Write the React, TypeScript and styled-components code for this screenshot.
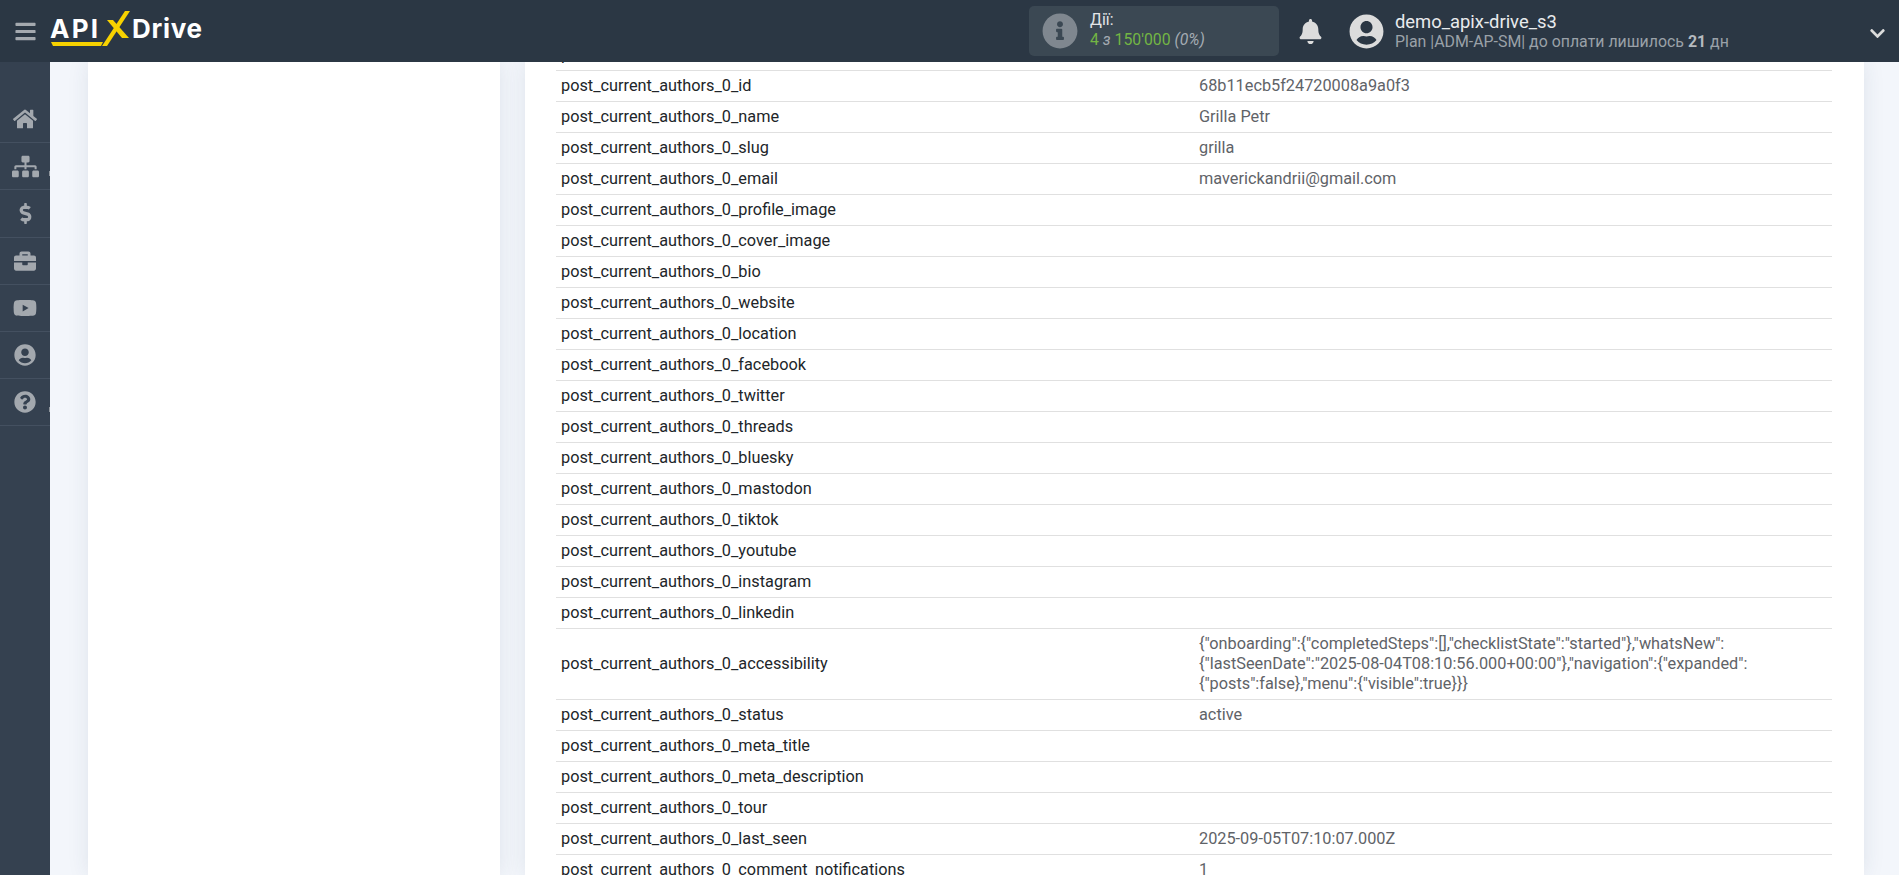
import React from "react";
import styled, { createGlobalStyle } from "styled-components";
import {
  FaBars,
  FaBell,
  FaBriefcase,
  FaChevronDown,
  FaDollarSign,
  FaHome,
  FaInfoCircle,
  FaQuestionCircle,
  FaSitemap,
  FaUserCircle,
  FaYoutube,
} from "react-icons/fa";

const GlobalStyle = createGlobalStyle`
  html, body {
    margin: 0;
    padding: 0;
    height: 100%;
    overflow: hidden;
    background: #f3f6fb;
    font-family: "Roboto", "Liberation Sans", sans-serif;
  }
`;

const Page = styled.div`
  width: 1899px;
  height: 875px;
  display: flex;
  flex-direction: column;
  overflow: hidden;
`;

const Header = styled.header`
  height: 62px;
  flex: none;
  display: flex;
  align-items: center;
  background: #2b3744;
  color: #fff;
  position: relative;
  z-index: 2;
`;

const Burger = styled.div`
  width: 50px;
  display: flex;
  justify-content: center;
  color: #a4a9af;
  font-size: 23px;
  line-height: 0;
`;

const LogoBox = styled.div`
  width: 980px;
  line-height: 0;
`;

const ActionsBox = styled.div`
  width: 250px;
  height: 50px;
  margin-left: -1px;
  box-sizing: border-box;
  padding-left: 13px;
  border-radius: 5px;
  background: #3b4853;
  display: flex;
  align-items: center;
  gap: 12px;
`;

const InfoIcon = styled.div`
  color: #7f878f;
  font-size: 36px;
  line-height: 0;
`;

const ActionsText = styled.div`
  font-size: 15.8px;
  line-height: 20px;
  color: #e3e5e8;
  margin-top: -2px;
`;

const Green = styled.span`
  color: #73b544;
`;

const Muted = styled.em`
  color: #a4abb2;
`;

const BellBox = styled.div`
  width: 60px;
  margin-left: 1px;
  display: flex;
  justify-content: center;
  color: #dcdcdc;
  font-size: 25px;
  line-height: 0;
`;

const Avatar = styled.div`
  margin-left: 9px;
  color: #dcdcdc;
  font-size: 35px;
  line-height: 0;
`;

const UserInfo = styled.div`
  margin-left: 11px;
  flex: 1;
`;

const UserName = styled.div`
  font-size: 18.4px;
  line-height: 22px;
  color: #e9ebed;
`;

const UserPlan = styled.div`
  font-size: 15.9px;
  line-height: 18px;
  color: #9aa1a8;

  b {
    font-weight: 700;
    color: #b5babf;
  }
`;

const Chevron = styled.div`
  width: 46px;
  box-sizing: border-box;
  padding: 4px 0 0 16px;
  color: #dcdcdc;
  font-size: 17px;
  line-height: 0;
`;

const Body = styled.div`
  flex: 1;
  display: flex;
  min-height: 0;
`;

const Sidebar = styled.nav`
  width: 50px;
  flex: none;
  padding-top: 34px;
  background: #354150;
`;

const SideItem = styled.div<{ $size: number; $notch?: boolean }>`
  height: 47.2px;
  box-sizing: border-box;
  border-bottom: 1px solid #445060;
  display: flex;
  align-items: center;
  justify-content: center;
  position: relative;
  color: #a3a8ae;
  font-size: ${({ $size }) => $size}px;
  line-height: 0;

  &::after {
    content: "";
    display: ${({ $notch }) => ($notch ? "block" : "none")};
    position: absolute;
    right: 0;
    top: 28px;
    width: 1px;
    height: 5px;
    background: #8f959c;
  }
`;

const Main = styled.main`
  flex: 1;
  display: flex;
  min-width: 0;
  padding: 0 35px 0 38px;
  gap: 25px;
  overflow: hidden;
`;

const Card = styled.section`
  background: #fff;
  box-shadow: 0 0 20px rgba(40, 60, 90, 0.1);
`;

const LeftCard = styled(Card)`
  width: 412px;
  flex: none;
`;

const RightCard = styled(Card)`
  flex: 1;
  min-width: 0;
  padding: 0 32px 0 31px;
`;

const Table = styled.div`
  margin-top: -22px;
  display: flex;
  flex-direction: column;
`;

const Row = styled.div`
  display: grid;
  grid-template-columns: 643px 1fr;
  align-items: center;
  min-height: 31px;
  box-sizing: border-box;
  padding: 5px 0;
  border-bottom: 1px solid #e0e0e0;
  font-size: 16.3px;
  line-height: 20px;
`;

const Key = styled.div`
  padding-left: 5px;
  color: #212529;
`;

const Value = styled.div`
  padding-right: 80px;
  color: #5f6368;
  word-break: break-word;
`;

const rows: [string, string][] = [
  ["post_current_authors_0", ""],
  ["post_current_authors_0_id", "68b11ecb5f24720008a9a0f3"],
  ["post_current_authors_0_name", "Grilla Petr"],
  ["post_current_authors_0_slug", "grilla"],
  ["post_current_authors_0_email", "maverickandrii@gmail.com"],
  ["post_current_authors_0_profile_image", ""],
  ["post_current_authors_0_cover_image", ""],
  ["post_current_authors_0_bio", ""],
  ["post_current_authors_0_website", ""],
  ["post_current_authors_0_location", ""],
  ["post_current_authors_0_facebook", ""],
  ["post_current_authors_0_twitter", ""],
  ["post_current_authors_0_threads", ""],
  ["post_current_authors_0_bluesky", ""],
  ["post_current_authors_0_mastodon", ""],
  ["post_current_authors_0_tiktok", ""],
  ["post_current_authors_0_youtube", ""],
  ["post_current_authors_0_instagram", ""],
  ["post_current_authors_0_linkedin", ""],
  [
    "post_current_authors_0_accessibility",
    '{"onboarding":{"completedSteps":[],"checklistState":"started"},"whatsNew":{"lastSeenDate":"2025-08-04T08:10:56.000+00:00"},"navigation":{"expanded":{"posts":false},"menu":{"visible":true}}}',
  ],
  ["post_current_authors_0_status", "active"],
  ["post_current_authors_0_meta_title", ""],
  ["post_current_authors_0_meta_description", ""],
  ["post_current_authors_0_tour", ""],
  ["post_current_authors_0_last_seen", "2025-09-05T07:10:07.000Z"],
  ["post_current_authors_0_comment_notifications", "1"],
];

const Logo = () => (
  <svg width="155" height="42" viewBox="0 0 155 42">
    <text x="0" y="28" fill="#fff" fontFamily="Inter, sans-serif" fontWeight="700" fontSize="26" textLength="48">
      API
    </text>
    <text x="82" y="28" fill="#fff" fontFamily="Inter, sans-serif" fontWeight="700" fontSize="26" textLength="70">
      Drive
    </text>
    <polygon points="1,32 53,32 51,36 3,36" fill="#f7d200" />
    <polygon points="75,1 80,1 57,36 52,36" fill="#f7d200" />
    <polygon points="57,10 63,10 79,28 72,28" fill="#f7d200" />
  </svg>
);

const App: React.FC = () => {
  return (
    <Page>
      <GlobalStyle />
      <Header>
        <Burger>
          <FaBars />
        </Burger>
        <LogoBox>
          <Logo />
        </LogoBox>
        <ActionsBox>
          <InfoIcon>
            <FaInfoCircle />
          </InfoIcon>
          <ActionsText>
            <div>Дії:</div>
            <div>
              <Green>4</Green> <Muted>з</Muted> <Green>150'000</Green> <Muted>(0%)</Muted>
            </div>
          </ActionsText>
        </ActionsBox>
        <BellBox>
          <FaBell />
        </BellBox>
        <Avatar>
          <FaUserCircle />
        </Avatar>
        <UserInfo>
          <UserName>demo_apix-drive_s3</UserName>
          <UserPlan>
            Plan |ADM-AP-SM| до оплати лишилось <b>21</b> дн
          </UserPlan>
        </UserInfo>
        <Chevron>
          <FaChevronDown />
        </Chevron>
      </Header>
      <Body>
        <Sidebar>
          <SideItem $size={24}>
            <FaHome />
          </SideItem>
          <SideItem $size={27} $notch>
            <FaSitemap />
          </SideItem>
          <SideItem $size={21}>
            <FaDollarSign />
          </SideItem>
          <SideItem $size={22}>
            <FaBriefcase />
          </SideItem>
          <SideItem $size={24}>
            <FaYoutube />
          </SideItem>
          <SideItem $size={22}>
            <FaUserCircle />
          </SideItem>
          <SideItem $size={22} $notch>
            <FaQuestionCircle />
          </SideItem>
        </Sidebar>
        <Main>
          <LeftCard />
          <RightCard>
            <Table>
              {rows.map(([key, value]) => (
                <Row key={key}>
                  <Key>{key}</Key>
                  <Value>{value}</Value>
                </Row>
              ))}
            </Table>
          </RightCard>
        </Main>
      </Body>
    </Page>
  );
};

export default App;
